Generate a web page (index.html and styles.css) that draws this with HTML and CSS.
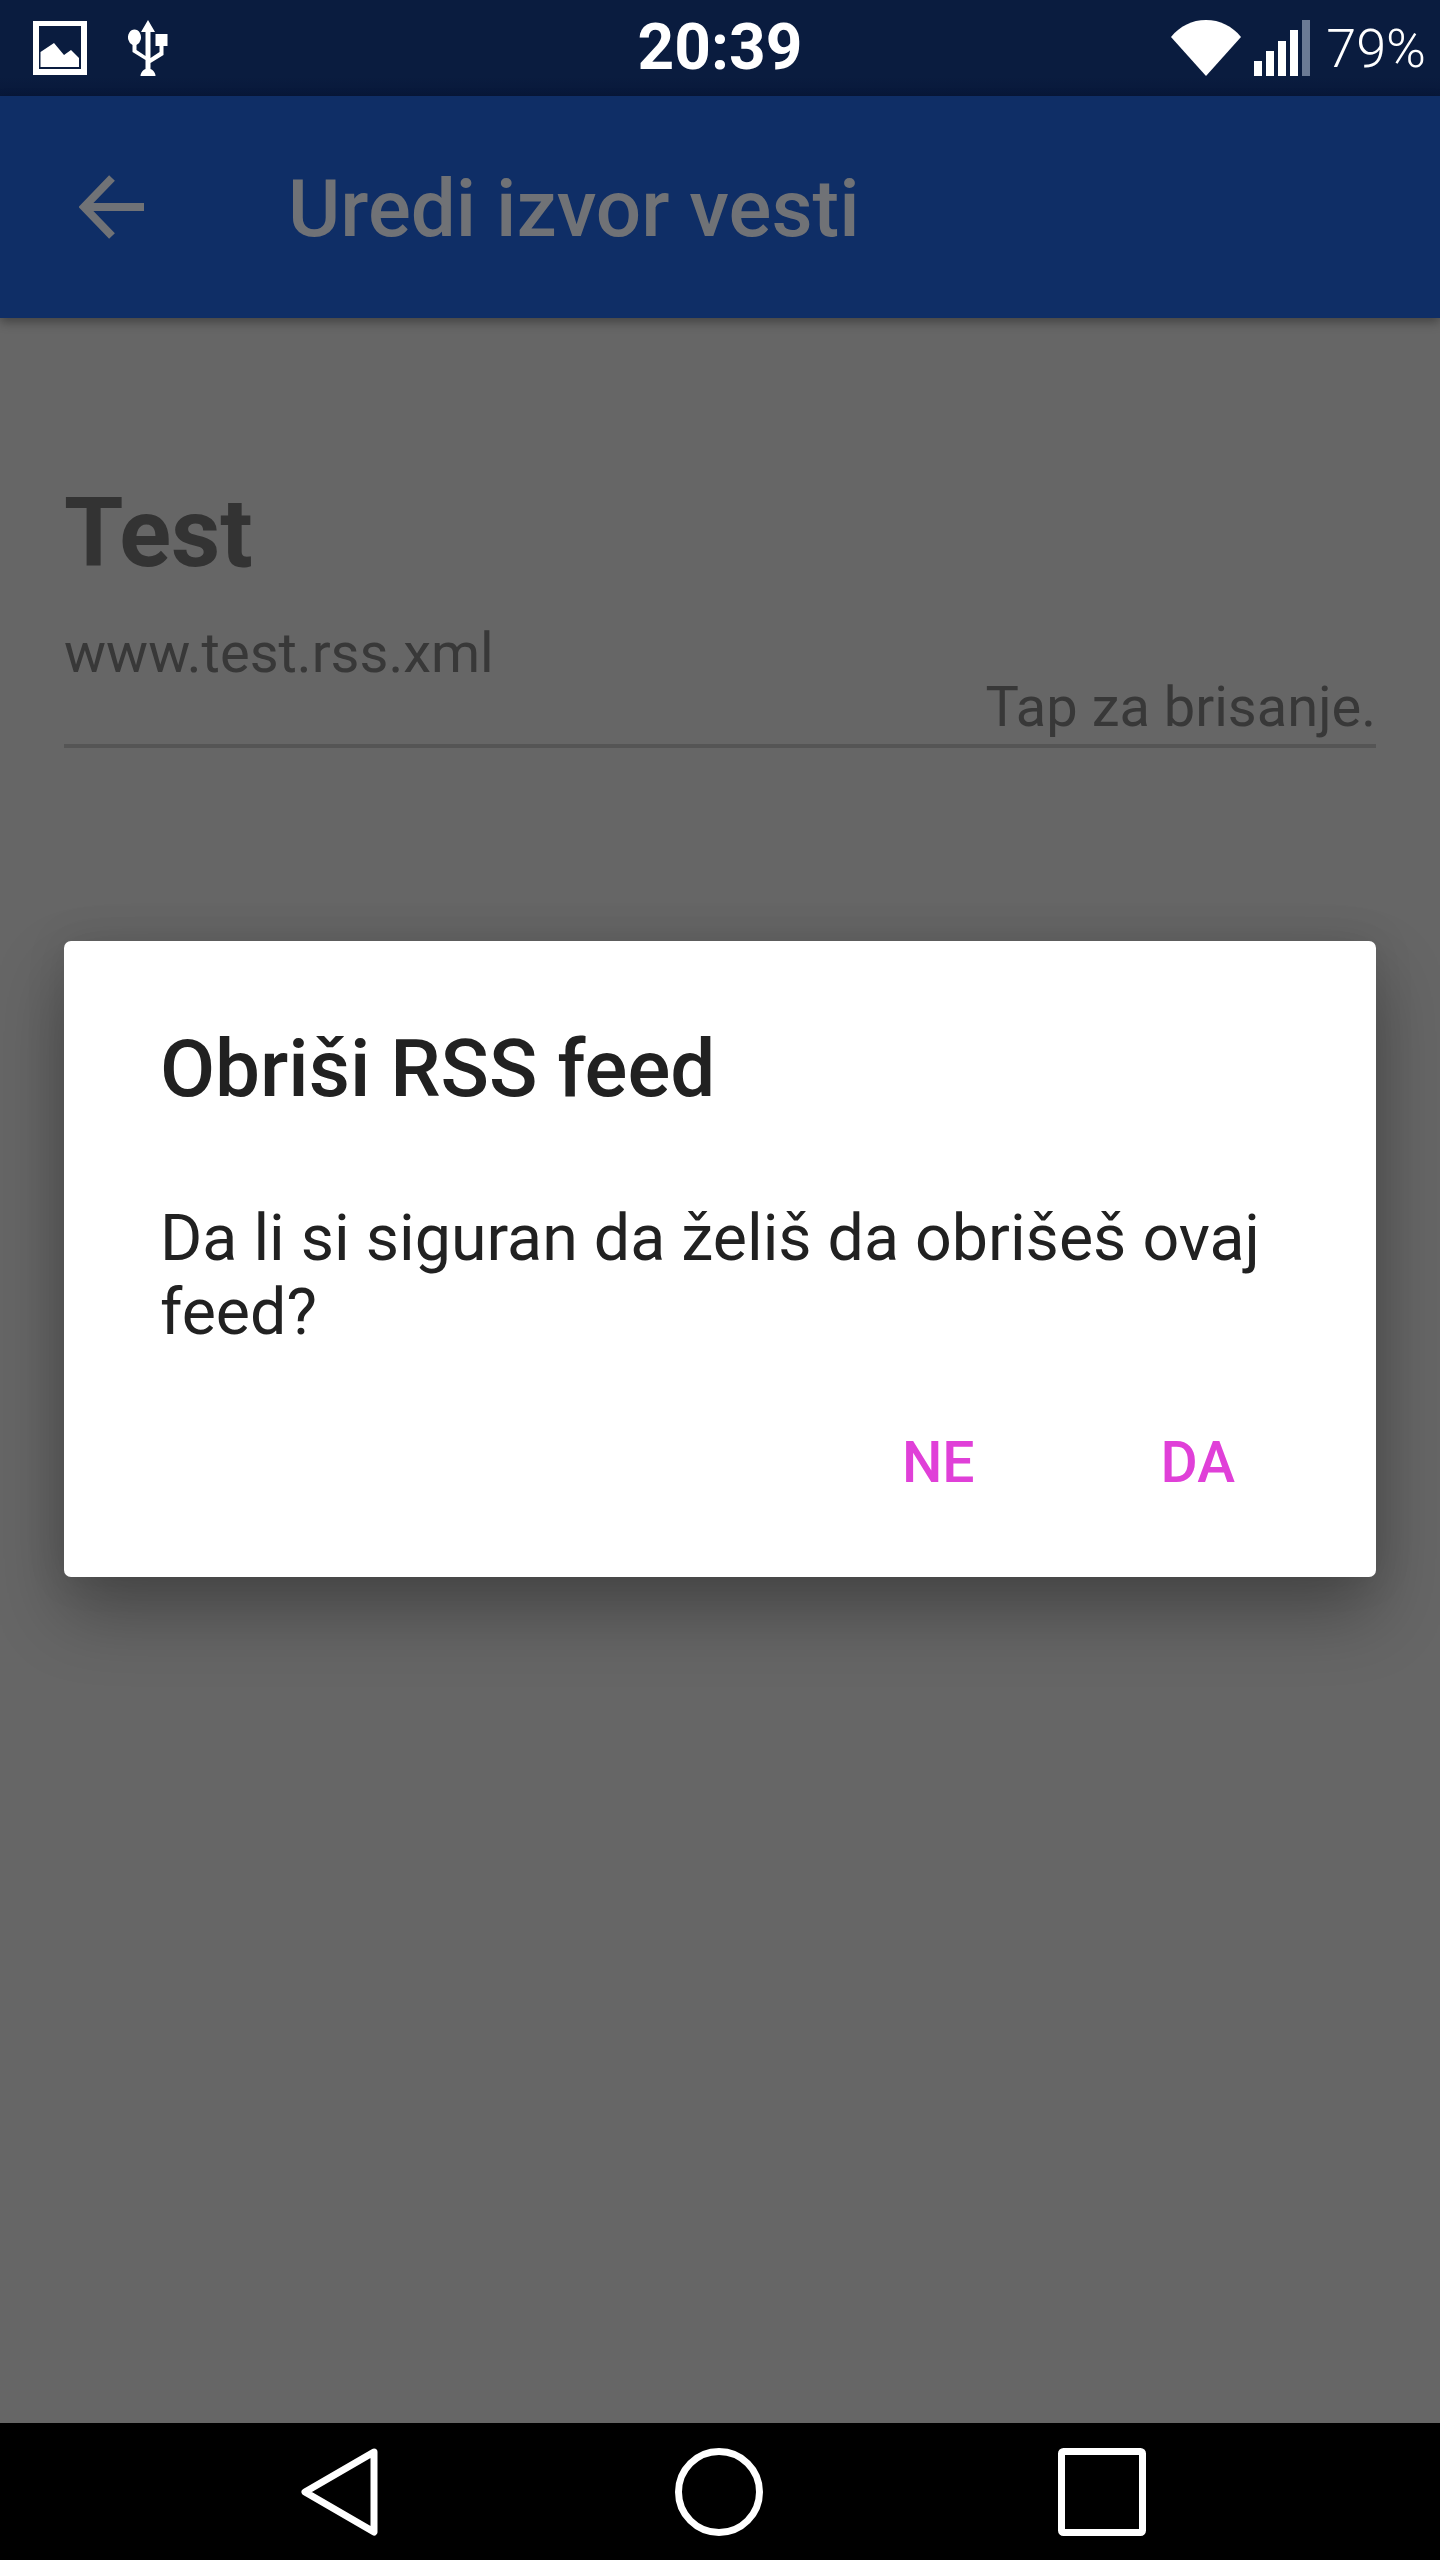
FILE: index.html
```html
<!DOCTYPE html>
<html>
  <head>
    <title>Uredi izvor vesti</title>
    <meta http-equiv="Content-Type" content="text/html; charset=UTF-8"/>
    <link rel="stylesheet" href="styles.css">
  </head>
  <body>
    <div class="screen">
      <div class="status-bar">
        <div class="status-left">
          <svg class="icon-image" width="54" height="54" viewBox="0 0 54 54">
            <path d="M0 0h54v54h-54z M6 5v43h42v-43z" fill="#fff" fill-rule="evenodd"/>
            <path d="M7.500 31L21 22l10 12 7-5 8 8v9h-38.500z" fill="#fff"/>
          </svg>
          <svg class="icon-usb" width="42" height="56" viewBox="0 0 42 56">
            <path d="M20 0l7 12h-4.500v26l9-6v-6h-4v-12h12v12h-4v9l-13 8v6a7.500 7.500 0 1 1-5 0v-9l-13-8v-7a6.500 8 0 1 1 4 0v5l9 6v-24h-4.500z" fill="#fff"/>
          </svg>
        </div>
        <div class="status-time">20:39</div>
        <div class="status-right">
          <svg class="icon-wifi" width="70" height="56" viewBox="0 0 70 56">
            <path d="M0 17C9 6 21 0 35 0s26 6 35 17L35 56z" fill="#fff"/>
          </svg>
          <div class="signal">
            <span class="bar bar-1"></span>
            <span class="bar bar-2"></span>
            <span class="bar bar-3"></span>
            <span class="bar bar-4"></span>
            <span class="bar bar-5"></span>
          </div>
          <span class="battery">79%</span>
        </div>
      </div>

      <div class="app-bar">
        <svg class="icon-back" width="66" height="64" viewBox="0 0 66 64">
          <path d="M33 3L5 32l28 29M5 32h60" fill="none" stroke="#707276" stroke-width="8"/>
        </svg>
        <div class="app-title">Uredi izvor vesti</div>
      </div>

      <div class="content">
        <div class="feed-name">Test</div>
        <div class="feed-url">www.test.rss.xml</div>
        <div class="feed-hint">Tap za brisanje.</div>
        <div class="feed-line"></div>

        <div class="dialog">
          <div class="dialog-title">Obriši RSS feed</div>
          <div class="dialog-text">Da li si siguran da želiš da obrišeš ovaj feed?</div>
          <div class="dialog-actions">
            <span class="dialog-btn">NE</span>
            <span class="dialog-btn">DA</span>
          </div>
        </div>
      </div>

      <div class="nav-bar">
        <svg class="nav-icon" width="80" height="88" viewBox="0 0 80 88">
          <path d="M74 4L5 44l69 40z" fill="none" stroke="#fff" stroke-width="7" stroke-linejoin="round"/>
        </svg>
        <svg class="nav-icon" width="88" height="88" viewBox="0 0 88 88">
          <circle cx="44" cy="44" r="40.500" fill="none" stroke="#fff" stroke-width="7"/>
        </svg>
        <svg class="nav-icon" width="88" height="88" viewBox="0 0 88 88">
          <rect x="3.500" y="3.500" width="81" height="81" rx="2" fill="none" stroke="#fff" stroke-width="7"/>
        </svg>
      </div>
    </div>
  </body>
</html>
```

FILE: styles.css
```css
body {
  margin: 0;
  font-family: 'Roboto', 'Liberation Sans', sans-serif;
  background-color: #666;
}

.screen {
  display: flex;
  flex-direction: column;
  height: 2560px;
  overflow: hidden;
}

/* status bar */
.status-bar {
  display: grid;
  grid-template-columns: 1fr auto 1fr;
  align-items: center;
  flex: 0 0 96px;
  background: linear-gradient(#0a1c3f 80%, #08183a);
  color: #fff;
}

.status-left {
  display: flex;
  align-items: center;
  gap: 41px;
  padding-left: 33px;
}

.status-time {
  font-size: 64px;
  font-weight: 700;
  line-height: 96px;
}

.status-right {
  display: flex;
  align-items: center;
  justify-content: flex-end;
  padding-right: 14px;
}

.icon-wifi {
  margin-right: 13px;
}

.signal {
  display: flex;
  align-items: flex-end;
  gap: 4px;
  height: 56px;
  margin-right: 16px;
}

.bar {
  width: 8px;
  background-color: #fff;
}

.bar-1 { height: 15px; }
.bar-2 { height: 25px; }
.bar-3 { height: 35px; }
.bar-4 { height: 46px; }
.bar-5 { height: 56px; background-color: #6b7a94; }

.battery {
  font-size: 54px;
  font-weight: 300;
}

/* app bar */
.app-bar {
  display: flex;
  align-items: center;
  flex: 0 0 222px;
  background-color: #0f2e66;
  box-shadow: 0 4px 10px rgba(0, 0, 0, .35);
  z-index: 1;
}

.icon-back {
  margin-left: 79px;
}

.app-title {
  margin: 4px 0 0 143px;
  color: #707276;
  font-size: 80px;
  font-weight: 500;
}

/* feed */
.content {
  position: relative;
  flex: 1;
  padding: 0 64px;
}

.feed-name {
  margin-top: 159px;
  color: #333;
  font-size: 96px;
  font-weight: 700;
  line-height: 112px;
}

.feed-url {
  margin-top: 32px;
  color: #383838;
  font-size: 56px;
  line-height: 64px;
}

.feed-hint {
  margin-top: -10px;
  color: #383838;
  font-size: 56px;
  line-height: 64px;
  text-align: right;
}

.feed-line {
  height: 4px;
  margin-top: 5px;
  background-color: #555;
}

/* dialog */
.dialog {
  position: absolute;
  top: 623px;
  left: 64px;
  box-sizing: border-box;
  width: 1312px;
  height: 636px;
  padding: 78px 97px 0 96px;
  border-radius: 7px;
  background-color: #fff;
  box-shadow: 0 36px 70px rgba(0, 0, 0, .3), 0 0 40px rgba(0, 0, 0, .1);
}

.dialog-title {
  color: #212121;
  font-size: 80px;
  font-weight: 500;
  line-height: 100px;
}

.dialog-text {
  margin-top: 82px;
  color: #212121;
  font-size: 64.500px;
  line-height: 74px;
}

.dialog-actions {
  display: flex;
  justify-content: flex-end;
  gap: 186px;
  margin-top: 81px;
  padding-right: 44px;
}

.dialog-btn {
  color: #e040d8;
  font-size: 57px;
  font-weight: 500;
  line-height: 66px;
}

/* nav bar */
.nav-bar {
  display: flex;
  align-items: center;
  flex: 0 0 137px;
  gap: 295px;
  padding-left: 300px;
  background-color: #000;
  z-index: 1;
}
```
